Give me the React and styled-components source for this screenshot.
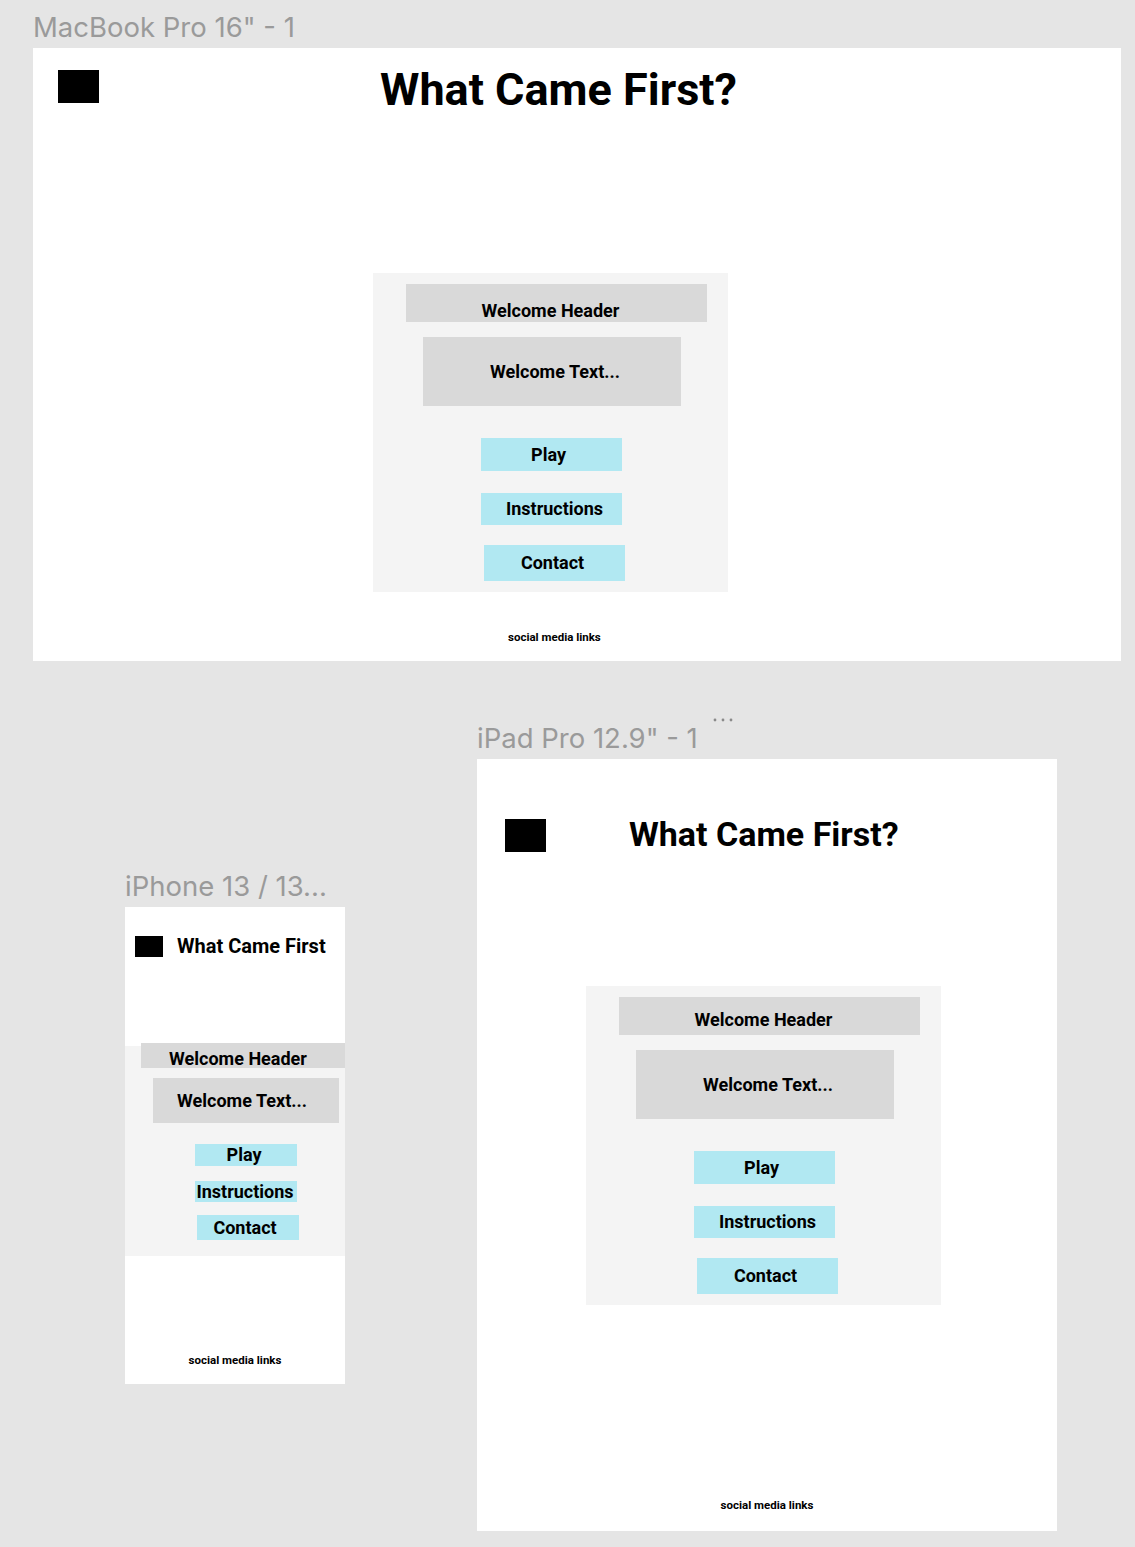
import React from "react";
import styled, { createGlobalStyle } from "styled-components";

const GlobalStyle = createGlobalStyle`
  html, body {
    margin: 0;
    padding: 0;
    background: #e5e5e5;
  }
  * { box-sizing: border-box; }
`;

const Canvas = styled.div`
  position: relative;
  width: 1135px;
  height: 1547px;
  background: #e5e5e5;
  overflow: hidden;
  font-family: Roboto, "Liberation Sans", sans-serif;
`;

// artboards sit on the free design canvas, so they get coordinates
const Artboard = styled.section`
  position: absolute;
  left: ${(p) => p.$x}px;
  top: ${(p) => p.$y}px;
  display: flex;
  flex-direction: column;
`;

const Label = styled.div`
  position: relative;
  height: 26px;
  margin-bottom: 8px;
  font-family: Inter, "Noto Sans", sans-serif;
  font-size: 27.5px;
  line-height: 26px;
  color: #9a9a9a;
  white-space: nowrap;
`;

const MoreDots = styled.svg`
  position: absolute;
  left: ${(p) => p.$x}px;
  top: -8px;
`;

const Frame = styled.div`
  width: ${(p) => p.$w}px;
  height: ${(p) => p.$h}px;
  background: #ffffff;
  display: flex;
  flex-direction: column;
  overflow: hidden;
`;

const TopBar = styled.header`
  height: ${(p) => p.$h}px;
  flex-shrink: 0;
  display: flex;
  align-items: flex-start;
  padding-top: ${(p) => p.$pt}px;
  padding-left: ${(p) => p.$pl}px;
`;

const Logo = styled.div`
  width: ${(p) => p.$w}px;
  height: ${(p) => p.$h}px;
  background: #000;
  flex-shrink: 0;
`;

const Title = styled.h1`
  margin: ${(p) => p.$mt}px 0 0 ${(p) => p.$ml}px;
  font-size: ${(p) => p.$size}px;
  line-height: 1;
  font-weight: 700;
  color: #000;
  white-space: nowrap;
`;

const Panel = styled.main`
  width: ${(p) => p.$w}px;
  height: ${(p) => p.$h}px;
  margin-left: ${(p) => p.$ml}px;
  flex-shrink: 0;
  background: #f4f4f4;
  display: flex;
  flex-direction: column;
  align-items: flex-start;
`;

const Block = styled.div`
  width: ${(p) => p.$w}px;
  height: ${(p) => p.$h}px;
  margin-left: ${(p) => p.$ml}px;
  margin-top: ${(p) => p.$mt}px;
  padding-left: ${(p) => (p.$dx > 0 ? p.$dx * 2 : 0)}px;
  padding-right: ${(p) => (p.$dx < 0 ? -p.$dx * 2 : 0)}px;
  flex-shrink: 0;
  display: flex;
  justify-content: center;
  font-size: 18px;
  line-height: 1;
  font-weight: 700;
  color: #000;
  white-space: nowrap;
`;

const HeaderBlock = styled(Block)`
  background: #d9d9d9;
  align-items: flex-end;
  padding-bottom: ${(p) => p.$pb}px;
`;

const TextBlock = styled(Block)`
  background: #d9d9d9;
  align-items: center;
`;

const MenuButton = styled(Block)`
  background: #b1e8f2;
  align-items: center;
`;

const Footer = styled.footer`
  margin-top: ${(p) => p.$mt}px;
  margin-left: ${(p) => (p.$ml === undefined ? "0" : `${p.$ml}px`)};
  align-self: ${(p) => (p.$ml === undefined ? "center" : "flex-start")};
  font-size: 11.5px;
  line-height: 1;
  font-weight: 700;
  color: #000;
  white-space: nowrap;
`;

const wide = {
  panel: { w: 355, h: 319 },
  header: { ml: 33, mt: 11, w: 301, h: 38, pb: 2, dx: -6 },
  text: { ml: 50, mt: 15, w: 258, h: 69, dx: 3 },
  buttons: [
    { label: "Play", ml: 108, mt: 32, w: 141, h: 33, dx: -3 },
    { label: "Instructions", ml: 108, mt: 22, w: 141, h: 32, dx: 3 },
    { label: "Contact", ml: 111, mt: 20, w: 141, h: 36, dx: -2 },
  ],
};

const tablet = { ...wide, header: { ...wide.header, pb: 6 } };

const phone = {
  panel: { w: 220, h: 210 },
  header: { ml: 16, mt: -3, w: 204, h: 25, pb: 0, dx: -5 },
  text: { ml: 28, mt: 10, w: 186, h: 45, dx: -4 },
  buttons: [
    { label: "Play", ml: 70, mt: 21, w: 102, h: 22, dx: -2 },
    { label: "Instructions", ml: 70, mt: 15, w: 102, h: 21, dx: -1 },
    { label: "Contact", ml: 72, mt: 13, w: 102, h: 25, dx: -3 },
  ],
};

function WelcomePanel({ spec, ml = 0 }) {
  const { panel, header, text, buttons } = spec;
  return (
    <Panel $w={panel.w} $h={panel.h} $ml={ml}>
      <HeaderBlock
        $ml={header.ml}
        $mt={header.mt}
        $w={header.w}
        $h={header.h}
        $pb={header.pb}
        $dx={header.dx}
      >
        Welcome Header
      </HeaderBlock>
      <TextBlock $ml={text.ml} $mt={text.mt} $w={text.w} $h={text.h} $dx={text.dx}>
        Welcome Text...
      </TextBlock>
      {buttons.map((b) => (
        <MenuButton key={b.label} $ml={b.ml} $mt={b.mt} $w={b.w} $h={b.h} $dx={b.dx}>
          {b.label}
        </MenuButton>
      ))}
    </Panel>
  );
}

export default function App() {
  return (
    <>
      <GlobalStyle />
      <Canvas>
        <Artboard $x={33} $y={14}>
          <Label>MacBook Pro 16" - 1</Label>
          <Frame $w={1088} $h={613}>
            <TopBar $h={225} $pt={22} $pl={25}>
              <Logo $w={41} $h={33} />
              <Title $size={45} $ml={281} $mt={-3}>What Came First?</Title>
            </TopBar>
            <WelcomePanel spec={wide} ml={340} />
            <Footer $mt={40} $ml={475}>social media links</Footer>
          </Frame>
        </Artboard>

        <Artboard $x={477} $y={725}>
          <Label>
            iPad Pro 12.9" - 1
            <MoreDots $x={235} width="22" height="6" viewBox="0 0 22 6">
              <circle cx="3" cy="3" r="1.4" fill="#8a8a8a" />
              <circle cx="11" cy="3" r="1.4" fill="#8a8a8a" />
              <circle cx="19" cy="3" r="1.4" fill="#8a8a8a" />
            </MoreDots>
          </Label>
          <Frame $w={580} $h={772}>
            <TopBar $h={227} $pt={60} $pl={28}>
              <Logo $w={41} $h={33} />
              <Title $size={34} $ml={83} $mt={-2}>What Came First?</Title>
            </TopBar>
            <WelcomePanel spec={tablet} ml={109} />
            <Footer $mt={195}>social media links</Footer>
          </Frame>
        </Artboard>

        <Artboard $x={125} $y={873}>
          <Label>iPhone 13 / 13...</Label>
          <Frame $w={220} $h={477}>
            <TopBar $h={139} $pt={29} $pl={10}>
              <Logo $w={28} $h={21} />
              <Title $size={20} $ml={14} $mt={0}>What Came First</Title>
            </TopBar>
            <WelcomePanel spec={phone} />
            <Footer $mt={99}>social media links</Footer>
          </Frame>
        </Artboard>
      </Canvas>
    </>
  );
}
